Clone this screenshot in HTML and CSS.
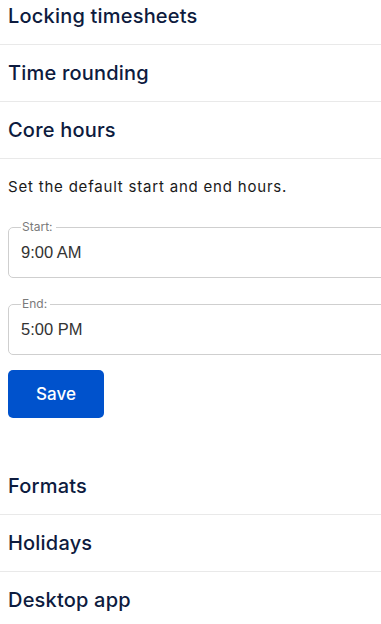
FILE: index.html
```html
<!DOCTYPE html>
<html lang="en">
<head>
<meta charset="utf-8">
<title>Settings</title>
<link rel="stylesheet" href="styles.css">
</head>
<body>
<div class="page">
  <div class="section">
    <div class="row">Locking timesheets</div>
    <div class="row">Time rounding</div>
    <div class="row">Core hours</div>
  </div>
  <div class="panel">
    <p class="desc">Set the default start and end hours.</p>
    <fieldset class="field">
      <legend>Start:</legend>
      <div class="value">9:00 AM</div>
    </fieldset>
    <fieldset class="field field-last">
      <legend>End:</legend>
      <div class="value">5:00 PM</div>
    </fieldset>
    <button class="save" type="button">Save</button>
  </div>
  <div class="section">
    <div class="row">Formats</div>
    <div class="row">Holidays</div>
    <div class="row">Desktop app</div>
  </div>
</div>
</body>
</html>
```
FILE: styles.css
```css
html, body {
  margin: 0;
  padding: 0;
  background: #ffffff;
}
body {
  overflow: hidden;
}
.page {
  margin-top: -12px;
  font-family: "Inter", "Liberation Sans", sans-serif;
  color: #0d1b3e;
}
.section {
  display: flex;
  flex-direction: column;
}
.row {
  height: 56px;
  display: flex;
  align-items: center;
  padding-left: 8px;
  font-size: 20px;
  font-weight: 500;
  letter-spacing: 0.2px;
  border-bottom: 1px solid #e9e9e9;
}
.section:last-child .row:last-child {
  border-bottom: none;
}
.panel {
  padding: 18px 0 40px 8px;
  display: flex;
  flex-direction: column;
  align-items: flex-start;
}
.desc {
  margin: 0 0 24px 0;
  font-family: "Inter", "Liberation Sans", sans-serif;
  font-size: 15px;
  line-height: 20px;
  letter-spacing: 0.8px;
  color: #1a1a1a;
  font-weight: 400;
}
.field {
  box-sizing: border-box;
  width: 420px;
  height: 57px;
  margin: 0 0 20px 0;
  padding: 0 12px;
  border: 1px solid #cfcfcf;
  border-radius: 5px;
}
.field-last {
  margin-bottom: 15px;
}
.field legend {
  padding: 0 3px 0 1px;
  font-size: 12px;
  color: #7a7a7a;
  line-height: 12px;
}
.value {
  font-family: "Liberation Sans", Arial, sans-serif;
  font-size: 16.5px;
  color: #333333;
  line-height: 18px;
  padding-top: 10px;
}
.save {
  width: 96px;
  height: 48px;
  border: none;
  border-radius: 5px;
  background: #0052cc;
  color: #ffffff;
  font-family: "Inter", "Liberation Sans", sans-serif;
  font-size: 17px;
  font-weight: 500;
  cursor: pointer;
}
```
